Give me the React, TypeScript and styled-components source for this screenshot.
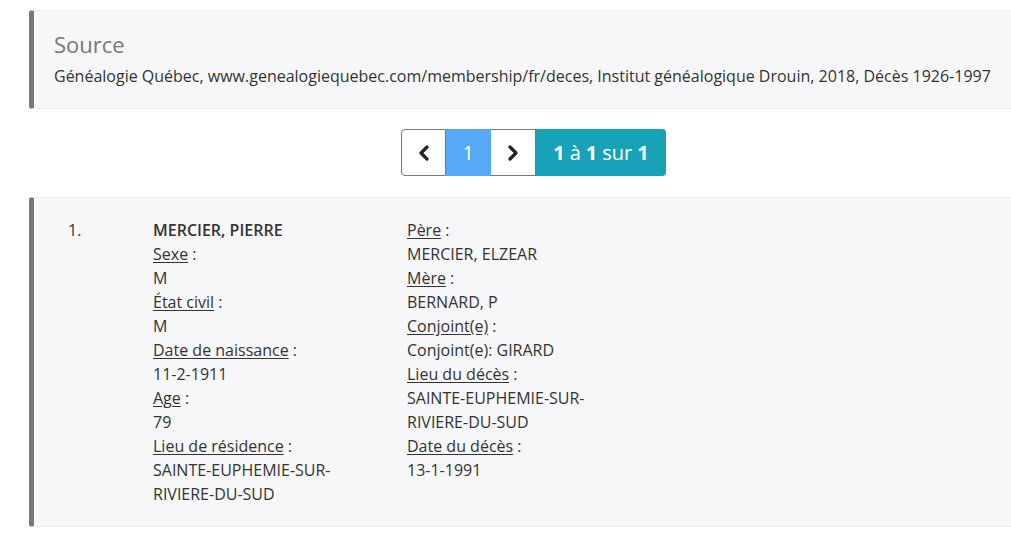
import React from "react";
import styled, {createGlobalStyle} from "styled-components";

const Global = createGlobalStyle`
	body {
		margin: 0;
		background: #fff;
		font-family: "Open Sans", "Liberation Sans", sans-serif;
		font-size: 16px;
		color: #333;
		overflow-x: hidden;
	}
`

const Page = styled.div`
	width: 1009px;
	padding: 10px 0 0 29px;
`

const Callout = styled.div`
	padding: 20px;
	border: 1px solid #eee;
	border-left: 5px solid #777;
	border-radius: 3px;
	background: #f7f7f9;
`

const SourceTitle = styled.h4`
	margin: 0 0 7px;
	font-size: 22px;
	line-height: 26px;
	font-weight: 400;
	color: #777;
`

const SourceText = styled.p`
	margin: 0;
	line-height: 24px;
	color: #333;
`

const PagerRow = styled.div`
	display: flex;
	justify-content: center;
	margin: 20px 0 21px;
`

const Pager = styled.div`
	display: flex;
	height: 47px;
`

const PageButton = styled.button<{ $active?: boolean; $first?: boolean }>`
	display: flex;
	align-items: center;
	justify-content: center;
	width: 45px;
	padding: 0;
	box-sizing: border-box;
	border: 1px solid #777;
	border-left-width: ${(p) => (p.$first ? "1px" : "0")};
	border-radius: ${(p) => (p.$first ? "4px 0 0 4px" : "0")};
	background: ${(p) => (p.$active ? "#58a8f8" : "#fff")};
	color: ${(p) => (p.$active ? "#fff" : "#222")};
	font-family: inherit;
	font-size: 20px;
	border-color: ${(p) => (p.$active ? "#58a8f8 #58a8f8 #58a8f8 #777" : "#777")};
`

const Count = styled.div`
	display: flex;
	align-items: center;
	padding: 0 17px;
	background: #17a2b8;
	color: #fff;
	font-size: 20px;
	border-radius: 0 4px 4px 0;
	b { font-weight: 700; }
	span { margin: 0 5px; }
`

const Record = styled(Callout)`
	display: grid;
	grid-template-columns: 99px 254px 254px;
	line-height: 24px;
`

const Num = styled.div`
	padding-left: 14px;
`

const Column = styled.div`
	display: flex;
	flex-direction: column;
	max-width: 200px;
`

const Name = styled.strong`
	font-weight: 600;
`

const Label = styled.div`
	u { text-decoration: underline; text-underline-offset: 2px; }
`

const Chevron = ({dir}: {dir: "left" | "right"}) => (
	<svg width="12" height="16" viewBox="0 0 12 16" fill="none">
		<path
			d={dir === "left" ? "M9 2 L3 8 L9 14" : "M3 2 L9 8 L3 14"}
			stroke="#222" strokeWidth="3.2" strokeLinecap="round" strokeLinejoin="round"
		/>
	</svg>
)

const left = [
	["Sexe", "M"],
	["État civil", "M"],
	["Date de naissance", "11-2-1911"],
	["Age", "79"],
	["Lieu de résidence", "SAINTE-EUPHEMIE-SUR-RIVIERE-DU-SUD"],
]

const right = [
	["Père", "MERCIER, ELZEAR"],
	["Mère", "BERNARD, P"],
	["Conjoint(e)", "Conjoint(e): GIRARD"],
	["Lieu du décès", "SAINTE-EUPHEMIE-SUR-RIVIERE-DU-SUD"],
	["Date du décès", "13-1-1991"],
]

const Fields = ({items}: {items: string[][]}) => (
	<>
		{items.map(([label, value]) => (
			<React.Fragment key={label}>
				<Label><u>{label}</u> :</Label>
				<div>{value}</div>
			</React.Fragment>
		))}
	</>
)

const App = () => {
	return (
		<Page>
			<Global />
			<Callout>
				<SourceTitle>Source</SourceTitle>
				<SourceText>
					Généalogie Québec, www.genealogiequebec.com/membership/fr/deces, Institut généalogique Drouin, 2018, Décès 1926-1997
				</SourceText>
			</Callout>
			<PagerRow>
				<Pager>
					<PageButton $first><Chevron dir="left" /></PageButton>
					<PageButton $active>1</PageButton>
					<PageButton><Chevron dir="right" /></PageButton>
					<Count><b>1</b><span>à</span><b>1</b><span>sur</span><b>1</b></Count>
				</Pager>
			</PagerRow>
			<Record>
				<Num>1.</Num>
				<Column>
					<Name>MERCIER, PIERRE</Name>
					<Fields items={left} />
				</Column>
				<Column>
					<Fields items={right} />
				</Column>
			</Record>
		</Page>
	);
};

export default App;
